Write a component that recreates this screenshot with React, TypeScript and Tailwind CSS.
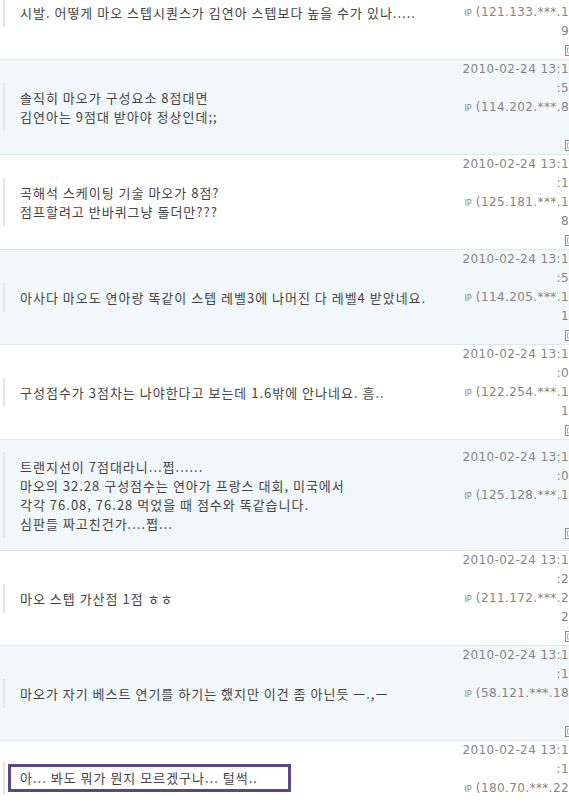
import React from 'react';

type Comment = {
  lines: string[];
  time: string;
  ip: string;
  tail: string;
  focused?: boolean;
};

const comments: Comment[] = [
  {
    lines: ['시발. 어떻게 마오 스텝시퀀스가 김연아 스텝보다 높을 수가 있나.....'],
    time: ':08',
    ip: '121.133.***.11',
    tail: '9',
  },
  {
    lines: ['솔직히 마오가 구성요소 8점대면', '김연아는 9점대 받아야 정상인데;;'],
    time: ':52',
    ip: '114.202.***.84',
    tail: '',
  },
  {
    lines: ['곡해석 스케이팅 기술 마오가 8점?', '점프할려고 반바퀴그냥 돌더만???'],
    time: ':13',
    ip: '125.181.***.12',
    tail: '8',
  },
  {
    lines: ['아사다 마오도 연아랑 똑같이 스텝 레벨3에 나머진 다 레벨4 받았네요.'],
    time: ':55',
    ip: '114.205.***.13',
    tail: '1',
  },
  {
    lines: ['구성점수가 3점차는 나야한다고 보는데 1.6밖에 안나네요. 흠..'],
    time: ':04',
    ip: '122.254.***.15',
    tail: '1',
  },
  {
    lines: [
      '트랜지선이 7점대라니...쩝......',
      '마오의 32.28 구성점수는 연아가 프랑스 대회, 미국에서',
      '각각 76.08, 76.28 먹었을 때 점수와 똑같습니다.',
      '심판들 짜고친건가....쩝...',
    ],
    time: ':06',
    ip: '125.128.***.14',
    tail: '',
  },
  {
    lines: ['마오 스텝 가산점 1점 ㅎㅎ'],
    time: ':27',
    ip: '211.172.***.25',
    tail: '2',
  },
  {
    lines: ['마오가 자기 베스트 연기를 하기는 했지만 이건 좀 아닌듯 ㅡ.,ㅡ'],
    time: ':11',
    ip: '58.121.***.189',
    tail: '',
  },
  {
    lines: ['아... 봐도 뭐가 뭔지 모르겠구나... 털썩..'],
    time: ':19',
    ip: '180.70.***.223',
    tail: '',
    focused: true,
  },
];

function ReportIcon() {
  return (
    <svg width="10" height="11" viewBox="0 0 10 11" className="block">
      <rect x="0.5" y="0.5" width="9" height="10" fill="#fff" stroke="#8a8a8a" />
      <rect x="2.5" y="3" width="5" height="5" fill="none" stroke="#b0b0b0" />
    </svg>
  );
}

export default function App() {
  return (
    <div className="w-[569px] h-[803px] overflow-hidden bg-white font-['Noto_Sans_CJK_KR',sans-serif]">
      <div className="w-[577px] -mt-[35px]">
        {comments.map((c, i) => (
          <div
            key={i}
            className={`flex items-center border-b border-[#e0e6e9] ${i % 2 === 1 ? 'bg-[#f2f8fa]' : 'bg-white'}`}
          >
            {/* 본문 */}
            <div className="flex-1 min-w-0">
              {c.focused ? (
                <div className="ml-[3px] mt-[12px] mb-[32px] border-l-2 border-[#e6e6e6] pl-[3px] py-[3px]">
                  <div className="w-[283px] border-[3px] border-[#5b4785] bg-white px-[9px] py-[1px] text-[13px] leading-[20px] tracking-[1px] text-[#444]">
                    {c.lines[0]}
                  </div>
                </div>
              ) : (
                <div className="ml-[3px] my-[12px] border-l-2 border-[#e6e6e6] pl-[15px] py-[5px] text-[13px] leading-[19px] tracking-[1px] text-[#444]">
                  {c.lines.map((l, j) => (
                    <div key={j}>{l}</div>
                  ))}
                </div>
              )}
            </div>

            {/* 작성일 / IP */}
            <div className="w-[120px] shrink-0 text-right whitespace-nowrap font-['DejaVu_Sans',sans-serif] text-[12px] leading-[19px] text-[#858585] tracking-[0.4px]">
              <div className="h-[19px]">2010-02-24 13:17</div>
              <div className="h-[19px]">{c.time}</div>
              <div className="h-[19px]">
                <span className="text-[8px] leading-none tracking-normal">IP</span> ({c.ip}
              </div>
              <div className="h-[19px] pr-[8px]">{c.tail}</div>
              <div className="flex h-[18px] items-center justify-end pr-[2px]">
                <ReportIcon />
              </div>
            </div>
          </div>
        ))}
      </div>
    </div>
  );
}
